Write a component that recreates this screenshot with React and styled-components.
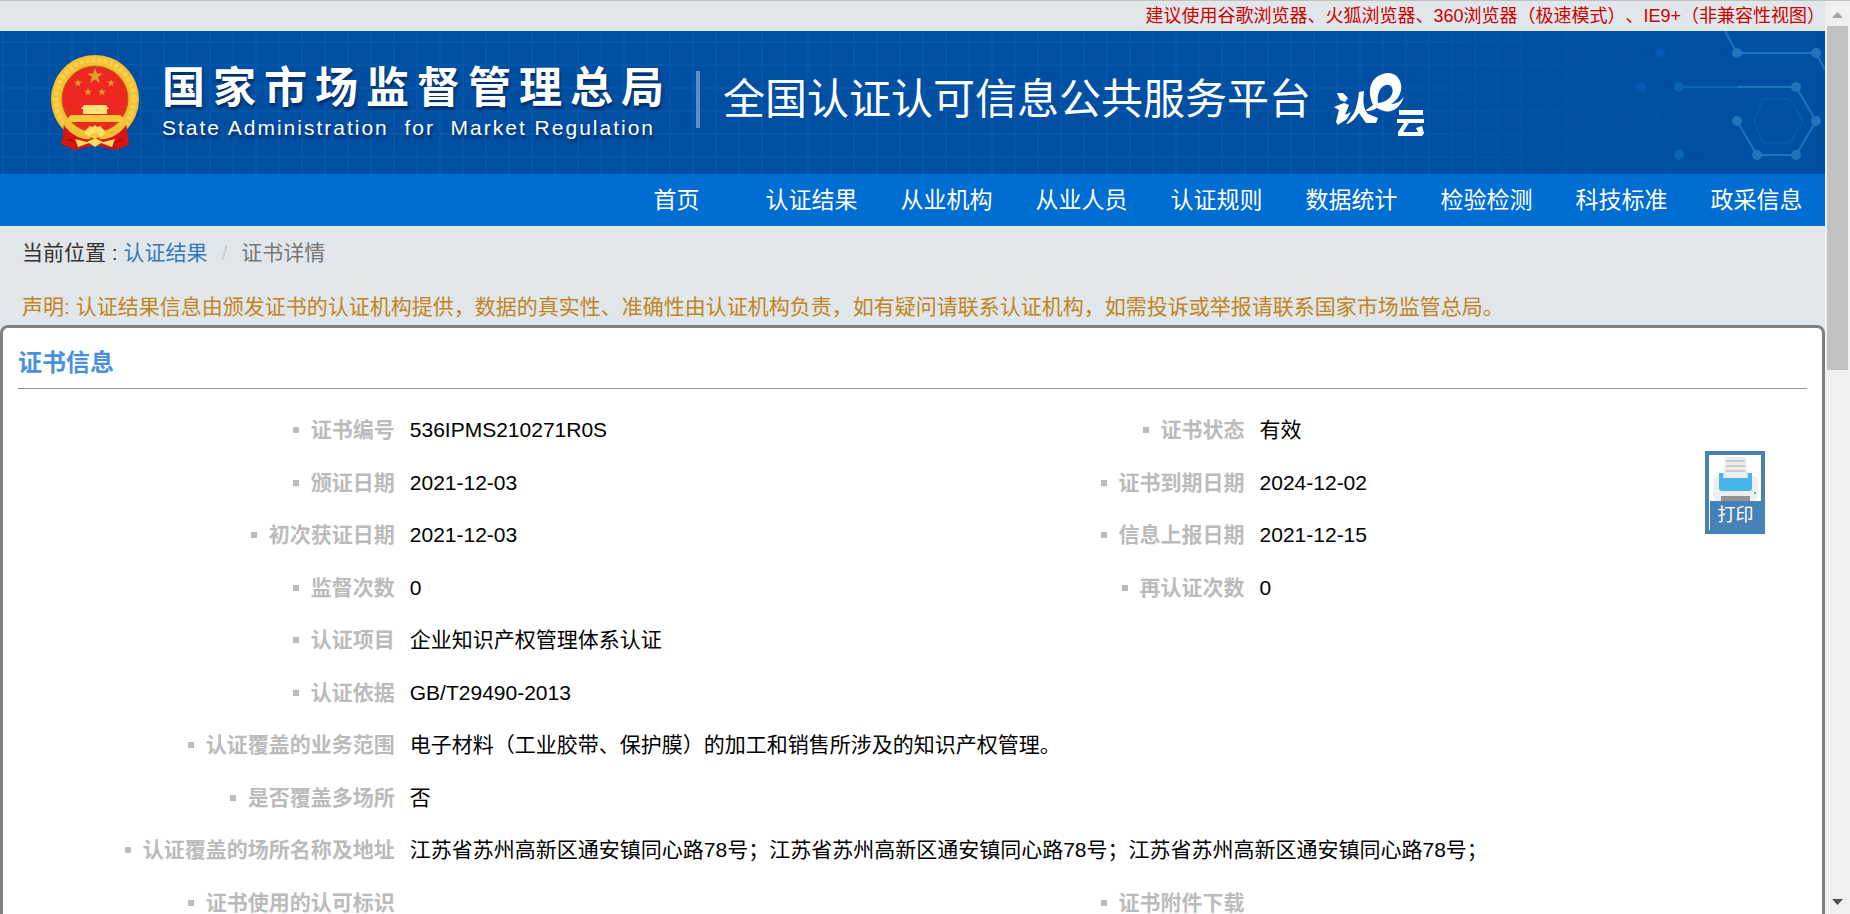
import React from 'react';
import styled, { createGlobalStyle } from 'styled-components';

const GlobalStyle = createGlobalStyle`
    * {
        box-sizing: border-box;
    }

    body {
        margin: 0;
        overflow: hidden;
        background-color: #e1e6ea;
        font-family: "Liberation Sans", "Noto Sans CJK SC", sans-serif;
        font-size: 21px;
        line-height: 30px;
        text-spacing-trim: space-all;
        color: #333;
    }

    a {
        text-decoration: none;
    }
`

const Screen = styled.div`
    display: flex;
    height: 100vh;
    overflow: hidden;
    border-top: 1px solid #c0c0c0;
`

const Page = styled.div`
    flex: 1;
    min-width: 0;
`

const Tip = styled.p`
    margin: 0;
    text-align: right;
    font-size: 18px;
    color: #c00;
`

const Banner = styled.header`
    position: relative;
    display: flex;
    align-items: center;
    height: 143px;
    padding: 0 0 6px 51px;
    color: white;
    background-color: #004fa2;
    background-image:
        linear-gradient(90deg, transparent 75%, #004fa2 92%),
        repeating-linear-gradient(90deg, transparent 0 2px, #0755a8 2px 4px, transparent 4px 23px),
        repeating-linear-gradient(180deg, transparent 0 10px, #0755a8 10px 12px, transparent 12px 23px);
`

const Network = styled.svg`
    position: absolute;
    right: 0;
    top: 0;
`

const Emblem = styled.svg`
    flex: none;
    margin: 6px 21px 0 0;
`

const Agency = styled.div`
    display: flex;
    flex-direction: column;
    padding-top: 4px;
    white-space: pre;
    text-shadow: 1px 3px 3px rgba(0, 20, 60, .6);

    strong {
        font-size: 43px;
        line-height: 52px;
        letter-spacing: 8px;
    }

    span {
        font-size: 21px;
        line-height: 28px;
        letter-spacing: 2px;
    }
`

const Divider = styled.div`
    width: 4px;
    height: 57px;
    margin: 0 23px 0 24px;
    background-color: #5d8fc6;
`

const Platform = styled.h1`
    margin: 0;
    font-size: 42px;
    font-weight: normal;
    line-height: 60px;
    white-space: nowrap;
`

const CloudLogo = styled.svg`
    flex: none;
    margin: 10px 0 0 23px;
`

const Menu = styled.nav`
    display: flex;
    justify-content: flex-end;
    padding-right: 1px;
    background-color: #006dd2;

    a {
        width: 135px;
        padding-top: 1px;
        text-align: center;
        font-size: 23px;
        line-height: 51px;
        color: white;
    }
`

const Breadcrumb = styled.nav`
    display: flex;
    padding: 12px 22px;
    white-space: pre;

    a {
        color: #337ab7;
    }

    i {
        padding: 0 14px;
        font-style: normal;
        color: #ccc;
    }

    span {
        color: #777;
    }
`

const Notice = styled.p`
    margin: 0;
    padding: 12px 22px 3px;
    color: #c08520;
`

const Card = styled.section`
    position: relative;
    min-height: 640px;
    padding: 15px;
    border: 3px solid #808080;
    border-radius: 8px;
    background-color: white;

    h2 {
        margin: 0 0 15px;
        padding-bottom: 6px;
        border-bottom: 1px solid #909090;
        font-size: 24px;
        line-height: 39px;
        color: #4a90e2;
    }
`

const Row = styled.dl`
    display: grid;
    grid-template-columns: ${(prop) => prop.$wide
        ? 'minmax(0, 219fr) minmax(0, 781fr)'
        : 'minmax(0, 219fr) minmax(0, 256fr) minmax(0, 219fr) minmax(0, 306fr)'};
    margin: 0;
    line-height: 52px;

    &:nth-of-type(even) {
        line-height: 53px;
    }
`

const Label = styled.dt`
    display: flex;
    align-items: center;
    justify-content: flex-end;
    padding-right: 15px;
    font-weight: bold;
    white-space: nowrap;
    color: #bbb;

    &::before {
        content: "";
        width: 6px;
        height: 6px;
        margin-right: 12px;
        background-color: #bbb;
    }
`

const Value = styled.dd`
    margin: 0;
    color: black;
`

const PrintButton = styled.button`
    position: absolute;
    right: 57px;
    top: 123px;
    display: flex;
    flex-direction: column;
    width: 60px;
    padding: 0;
    border: 4px solid #4682b8;
    background-color: white;
    cursor: pointer;

    svg {
        display: block;
    }

    span {
        align-self: stretch;
        margin-left: 1px;
        padding: 1px 0 2px;
        font-family: "Liberation Sans", "Noto Sans CJK SC", sans-serif;
        font-size: 18px;
        line-height: 26px;
        color: white;
        background-color: #4682b8;
    }
`

const ScrollBar = styled.div`
    display: flex;
    flex-direction: column;
    align-items: center;
    justify-content: space-between;
    width: 25px;
    padding: 11px 2px 9px;
    background-color: #f0f0f0;
`

const Thumb = styled.div`
    align-self: stretch;
    height: 344px;
    margin: 8px 0 auto;
    background-color: #c1c1c1;
`

const menuItems = ['首页', '认证结果', '从业机构', '从业人员', '认证规则', '数据统计', '检验检测', '科技标准', '政采信息'];

const rows = [
    [['证书编号', '536IPMS210271R0S'], ['证书状态', '有效']],
    [['颁证日期', '2021-12-03'], ['证书到期日期', '2024-12-02']],
    [['初次获证日期', '2021-12-03'], ['信息上报日期', '2021-12-15']],
    [['监督次数', '0'], ['再认证次数', '0']],
    [['认证项目', '企业知识产权管理体系认证']],
    [['认证依据', 'GB/T29490-2013']],
    [['认证覆盖的业务范围', '电子材料（工业胶带、保护膜）的加工和销售所涉及的知识产权管理。']],
    [['是否覆盖多场所', '否']],
    [['认证覆盖的场所名称及地址', '江苏省苏州高新区通安镇同心路78号；江苏省苏州高新区通安镇同心路78号；江苏省苏州高新区通安镇同心路78号；']],
    [['证书使用的认可标识', ''], ['证书附件下载', '']],
];

const nodes = [[35, 22], [16, 56], [54, 56], [112, 22], [191, 22], [171, 56], [112, 90], [191, 90], [132, 124], [171, 124], [54, 124]];

const star = 'M0-8L2-2.5H8L3 1L5 7L0 3.5L-5 7L-3 1L-8-2.5H-2Z';

function NetworkArt() {
    return (
        <Network width="200" height="143" viewBox="0 0 200 143" fill="none" aria-hidden="true">
            <path d="M47 0L38 17M38 27L54 56M16 56L54 124L45 143" stroke="#0558ac" />
            <path d="M54 56H112" stroke="#0d62b2" strokeWidth="2" />
            <path d="M100 0L112 22H191L200 39M112 56H171L191 90L171 124H132L112 90" stroke="#1a77bd" strokeWidth="2" />
            <path d="M129 90L138 68H165L178 90L165 112H138Z" stroke="#0f60ae" />
            {nodes.map(([x, y]) => (
                <circle key={x + '-' + y} cx={x} cy={y} r="5" fill={x < 40 ? '#0558b4' : x < 60 ? '#0a63b6' : '#2275bd'} />
            ))}
        </Network>
    );
}

function EmblemArt() {
    return (
        <Emblem width="90" height="96" viewBox="0 0 90 96" aria-hidden="true">
            <circle cx="44" cy="44" r="44" fill="#f4c033" />
            <circle cx="44" cy="44" r="39" fill="none" stroke="#fbd04a" strokeWidth="5" strokeDasharray="4 2" />
            <circle cx="44" cy="44" r="33" fill="#ee2820" stroke="#a86f14" />
            <g fill="#d9a02c">
                <path d={star} transform="translate(44 21)" />
                <path d={star} transform="translate(27 28) scale(.5)" />
                <path d={star} transform="translate(60 28) scale(.5)" />
                <path d={star} transform="translate(37 37) scale(.5)" />
                <path d={star} transform="translate(51 37) scale(.5)" />
            </g>
            <path d="M33 50H55L58 54H56V59H32V54H30Z" fill="#ffe27a" />
            <path d="M20 60H69L73 63L72 67H15L17 63Z" fill="#f7c93a" />
            <path d="M13 68L24 76L44 84L64 76L75 68L77 82L78 90L64 95L44 90L24 95L10 89L12 80Z" fill="#d81410" />
            <path d="M16 84L26 88L24 94M72 84L62 88L64 94" fill="none" stroke="#a80c0c" />
            <path d="M13 64C23 80 34 80 36 76L40 84C30 86 18 78 13 70ZM75 64C65 80 54 80 52 76L48 84C58 86 70 78 75 70Z" fill="#f4c033" />
            <path d="M34 79C33 74 38 74 38 71L42 72L44 70L46 72L50 71C50 74 55 74 54 79L49 82C48 77 40 77 39 82Z" fill="#ffdd60" />
            <path d="M24 84L36 87L44 83L52 87L64 84L61 92L50 88L44 92L38 88L27 92Z" fill="#ffdd60" />
        </Emblem>
    );
}

function App() {
    return (
        <>
            <GlobalStyle />
            <Screen>
                <Page>
                    <Tip>建议使用谷歌浏览器、火狐浏览器、360浏览器（极速模式）、IE9+（非兼容性视图）</Tip>

                    <Banner>
                        <NetworkArt />
                        <EmblemArt />
                        <Agency>
                            <strong>国家市场监督管理总局</strong>
                            <span>State Administration  for  Market Regulation</span>
                        </Agency>
                        <Divider />
                        <Platform>全国认证认可信息公共服务平台</Platform>
                        <CloudLogo width="90" height="64" viewBox="0 0 90 64" fill="white" role="img" aria-label="认e云">
                            <path d="M3 20L9 20L14 25L11 29L6 27ZM0 34L10 30L15 32L11 42L17 39L13 46L4 52L2 49L5 37Z" />
                            <path d="M25 19L30 18C29 30 29 35 34 41L44 45L42 50L32 50L25 40C22 44 18 50 12 51L20 40C23 33 24 27 25 19Z" />
                            <path fillRule="evenodd" d="M39 32C31 13 40 1 54 0C69 0 73 22 57 31C64 31 67 27 70 24C64 40 53 41 43 35C38 38 33 39 32 37ZM44 30C55 29 62 20 57 13C50 8 42 18 44 30Z" />
                            <path d="M65 37H89V42H65ZM63 46H90V50H75L69 59H84L82 55L88 53L90 60L88 63H64L64 59L70 50H63Z" />
                        </CloudLogo>
                    </Banner>

                    <Menu>
                        {menuItems.map((item) => <a key={item} href="#">{item}</a>)}
                    </Menu>

                    <Breadcrumb>
                        当前位置 : <a href="#">认证结果</a>
                        <i>/</i>
                        <span>证书详情</span>
                    </Breadcrumb>

                    <Notice>声明: 认证结果信息由颁发证书的认证机构提供，数据的真实性、准确性由认证机构负责，如有疑问请联系认证机构，如需投诉或举报请联系国家市场监管总局。</Notice>

                    <Card>
                        <h2>证书信息</h2>
                        {rows.map((cells) => (
                            <Row key={cells[0][0]} $wide={cells.length === 1}>
                                {cells.map(([label, value]) => (
                                    <React.Fragment key={label}>
                                        <Label>{label}</Label>
                                        <Value>{value}</Value>
                                    </React.Fragment>
                                ))}
                            </Row>
                        ))}
                        <PrintButton type="button">
                            <svg width="52" height="46" viewBox="0 0 52 46" aria-hidden="true">
                                <rect x="4" y="21" width="45" height="25" rx="5" fill="#eee" />
                                <path d="M10 18H43V33Q43 36 40 36H13Q10 36 10 33Z" fill="#45b6ea" />
                                <path d="M16 2H37L39 23H14Z" fill="#ececec" />
                                <path d="M17 6H36M17 11H36M17 16H36" stroke="#ccc" strokeWidth="2" />
                                <rect x="12" y="41" width="29" height="5" fill="#929292" />
                                <circle cx="46" cy="38" r="1" fill="#2aa860" />
                            </svg>
                            <span>打印</span>
                        </PrintButton>
                    </Card>
                </Page>

                <ScrollBar aria-hidden="true">
                    <svg width="11" height="6" viewBox="0 0 11 6"><path d="M0 6L5.500 0L11 6Z" fill="#a3a3a3" /></svg>
                    <Thumb />
                    <svg width="11" height="6" viewBox="0 0 11 6"><path d="M0 0H11L5.500 6Z" fill="#505050" /></svg>
                </ScrollBar>
            </Screen>
        </>
    );
}

export default App;
